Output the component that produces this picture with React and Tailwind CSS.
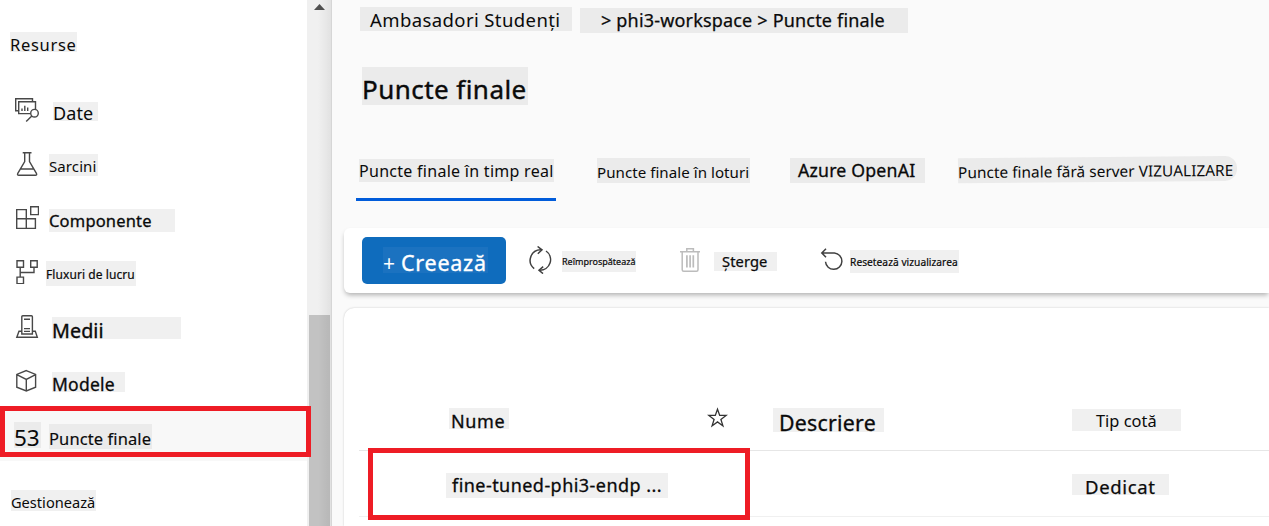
import React from "react";

function Tag({ box, text, children }) {
  return (
    <div className={`shrink-0 whitespace-pre ${box}`}>
      <span className={`block ${text}`}>{children}</span>
    </div>
  );
}

function Icon({ children, className = "ml-[15px] mt-[14px] h-6 w-6 text-[#484848]", viewBox = "0 0 24 24" }) {
  return (
    <svg className={`shrink-0 ${className}`} viewBox={viewBox} fill="none" stroke="currentColor" strokeWidth="1.4">
      {children}
    </svg>
  );
}

const NAV = [
  {
    label: "Date",
    box: "ml-[14px] mt-[18px] h-[19px] w-[45px] bg-[#f0f0f0]",
    text: "text-[18px] leading-[22px] tracking-[0.1px]",
    icon: (
      <>
        <path d="M3.5 12.8H.7V.8h16.8v3" />
        <path d="M15.2 15.6H3.7V3.8h16.8v7.4" />
        <path d="M7 10.6V13M9.8 7.8V13M12.7 9.4V13" />
        <circle cx="19.5" cy="15.2" r="3.8" />
        <path d="M16.8 17.9 11.2 23.5" />
      </>
    ),
  },
  {
    label: "Sarcini",
    box: "ml-[10px] mt-[16px] h-[22px] w-[49px] bg-[#f0f0f0]",
    text: "text-[15px] leading-[24px] tracking-[0.1px]",
    icon: (
      <>
        <path d="M7.7.8h8.8M9.7.8v8.7L2.8 21.3q-.9 2 1 2h16.6q1.9 0 1-2L14.5 9.5V.8M5.4 17h13.4" />
      </>
    ),
  },
  {
    label: "Componente",
    box: "ml-[10px] mt-[17px] h-[23px] w-[126px] bg-[#f0f0f0]",
    text: "text-[16.5px] leading-[23px] tracking-[0.18px] [-webkit-text-stroke:0.3px]",
    icon: (
      <>
        <path d="M1.7 3.6h9.6v18.8H1.7zM1.7 12.8h18.7v9.6H11.3M15.7.8h7.8v7.8h-7.8z" />
      </>
    ),
  },
  {
    label: "Fluxuri de lucru",
    box: "ml-[7px] mt-[15px] h-[25px] w-[90px] bg-[#f0f0f0]",
    text: "text-[12px] leading-[27px] tracking-[0.08px] [-webkit-text-stroke:0.2px]",
    icon: (
      <>
        <path d="M2 .7h6.5v6.5H2zM15.7.7h6.5v6.5h-6.5zM2 17.1h6.5v6.5H2zM5.2 7.2v9.9M5.2 12.5H19V7.2" />
      </>
    ),
  },
  {
    label: "Medii",
    box: "ml-[13px] mt-[17px] h-[22px] w-[129px] bg-[#f0f0f0]",
    text: "text-[19.7px] leading-[28px] tracking-[0.1px] [-webkit-text-stroke:0.35px]",
    icon: (
      <>
        <path d="M6.8 20V2.8q0-1 1-1h8.6q1 0 1 1V20zM6.8 17.3H4L1.8 23.3h20.5L20.3 17.3h-2.9M9 5.2h6M9 14.6h6M9 17.4h6" />
      </>
    ),
  },
  {
    label: "Modele",
    box: "ml-[13px] mt-[18px] h-[20px] w-[73px] bg-[#f0f0f0]",
    text: "text-[17.5px] leading-[24px] tracking-[0.25px] [-webkit-text-stroke:0.3px]",
    icon: (
      <>
        <path d="M11.3 2.6 20.6 6.4V19.2L11.3 23 1.8 19.2V6.4zM1.8 6.6l9.5 4.8 9.3-4.8M11.3 11.4V23" />
      </>
    ),
  },
];

function Sidebar() {
  return (
    <aside className="flex h-full w-[307px] shrink-0 flex-col bg-white">
      <div className="h-[84px] pl-[10px] pt-[32px]">
        <Tag box="h-[20px] w-[67px] bg-[#f0f0f0]" text="text-[16.5px] leading-[25px] tracking-[0.68px]">
          Resurse
        </Tag>
      </div>
      <nav className="flex h-[322px] shrink-0 flex-col">
        {NAV.map((n) => (
          <div key={n.label} className="flex h-[54px] shrink-0 items-start">
            <Icon>{n.icon}</Icon>
            <Tag box={n.box} text={n.text}>
              {n.label}
            </Tag>
          </div>
        ))}
      </nav>
      <div className="flex h-[55px] shrink-0 items-start bg-[#f8f8f8] pl-[14px]">
        <Tag box="mt-4 h-[26px] w-[27px] bg-[#ebebeb]" text="text-[22.5px] leading-[31px]">
          53
        </Tag>
        <Tag box="ml-2 mt-[18px] h-[25px] w-[103px] bg-[#ebebeb]" text="text-[16.5px] leading-[29px] tracking-[0.1px] [-webkit-text-stroke:0.15px]">
          Puncte finale
        </Tag>
      </div>
      <div className="pl-[11px] pt-[29px]">
        <Tag box="h-[21px] w-[85px] bg-[#f0f0f0]" text="text-[14.6px] leading-[24px]">
          Gestionează
        </Tag>
      </div>
    </aside>
  );
}

function Scrollbar() {
  return (
    <div className="relative flex h-full w-[25px] shrink-0 flex-col bg-[#f0f0f0]">
      <svg className="ml-[7px] mt-1 h-[6px] w-[11px] shrink-0" viewBox="0 0 11 6">
        <path d="M5.5 0 11 6H0z" fill="#505050" />
      </svg>
      <div className="ml-[2px] mt-[305px] w-[21px] grow bg-[#c2c2c2]" />
      <div className="absolute inset-y-0 right-0 w-[14px] border-r border-[#d6d6d6] bg-linear-to-r from-black/0 to-black/6" />
    </div>
  );
}

function Toolbar() {
  return (
    <div className="flex h-[65px] shrink-0 items-start rounded-l-md bg-white shadow-[0_3px_5px_-1px_rgba(0,0,0,0.3)]">
      <button className="ml-[18px] mt-[9px] flex h-[47px] w-[144px] shrink-0 items-start rounded-[5px] bg-[#0f6cbd] text-white">
        <span className="ml-[21px] mt-[10px] flex h-[26px] w-[105px] bg-[#1b72c0]">
          <span className="w-[18px] text-left text-[21px] leading-[33px]">+</span>
          <span className="text-[21.5px] leading-[32px] tracking-[0.75px] [-webkit-text-stroke:0.35px]">Creează</span>
        </span>
      </button>
      <Icon className="ml-[22px] mt-[18px] h-[28px] w-[24px] text-[#404040]" viewBox="0 0 24 28">
        <path d="M6.2 22.6A10.6 10.6 0 0 1 13 3.7M18 5a10.6 10.6 0 0 1-6.5 19.3" strokeWidth="1.5" />
        <path d="M9.6.5 14 3.8 9.8 7.8M15.2 20.6 11 24.3 15 27.6" strokeWidth="1.5" />
      </Icon>
      <Tag box="ml-[10px] mt-[23px] h-[21px] w-[74px] bg-[#f0f0f0]" text="text-[9px] leading-[21px] [-webkit-text-stroke:0.2px]">
        Reîmprospătează
      </Tag>
      <Icon className="ml-[44px] mt-[20px] h-[24px] w-[20px] text-[#bcbcbc]" viewBox="0 0 20 24">
        <path d="M0 3.7h20M6.8 3.7V.8h6.6v2.9M2.2 3.7v18q0 1.5 1.5 1.5h12.8q1.5 0 1.5-1.5v-18" strokeWidth="1.5" />
        <path d="M6.9 7.2v12.4M10.1 7.2v12.4M13.3 7.2v12.4" strokeWidth="1.7" />
      </Icon>
      <Tag box="ml-[14px] mt-[24px] h-[19px] w-[63px] bg-[#f0f0f0] pl-2" text="text-[14.7px] leading-[19px] tracking-[0.1px] [-webkit-text-stroke:0.25px]">
        Șterge
      </Tag>
      <Icon className="ml-[43px] mt-[20px] h-[24px] w-[24px] text-[#404040]">
        <path d="M2 5h12.4a8.2 8.2 0 1 1-8.9 8.8M6 .8 1.8 5 6 9.2" strokeWidth="1.5" />
      </Icon>
      <Tag box="ml-[6px] mt-[22px] h-[23px] w-[109px] bg-[#f0f0f0]" text="text-[10.2px] leading-[25px] tracking-[0.04px] [-webkit-text-stroke:0.2px]">
        Resetează vizualizarea
      </Tag>
    </div>
  );
}

function Table() {
  return (
    <div className="mt-[15px] flex grow flex-col rounded-tl-[10px] bg-white pl-[15px] shadow-[0_0_2px_rgba(0,0,0,0.22)]">
      <div className="flex h-[143px] shrink-0 items-start border-b border-[#e6e6e6]">
        <Tag box="ml-[90px] mt-[100px] h-[21px] w-[60px] bg-[#f0f0f0] pl-[2px]" text="text-[18px] leading-[26px] tracking-[0.65px] [-webkit-text-stroke:0.3px]">
          Nume
        </Tag>
        <Icon className="ml-[198px] mt-[99px] h-[21px] w-[21px] text-[#333]" viewBox="0 0 21 21">
          <path d="M10.5 2.2 12.7 8.4h6.4l-5.2 4 2 6.5-5.4-4-5.4 4 2-6.5-5.2-4h6.4z" strokeWidth="1.3" />
        </Icon>
        <Tag box="ml-[45px] mt-[100px] h-[24px] w-[111px] bg-[#f0f0f0] pl-[6px]" text="text-[21.3px] leading-[30px] tracking-[0.25px] [-webkit-text-stroke:0.3px]">
          Descriere
        </Tag>
        <Tag box="ml-[188px] mt-[101px] h-[22px] w-[109px] bg-[#f0f0f0] pl-[24px]" text="text-[16.4px] leading-[24px]">
          Tip cotă
        </Tag>
      </div>
      <div className="flex h-[66px] shrink-0 items-start border-b border-[#f0f0f0]">
        <Tag box="ml-[87px] mt-[22px] h-[25px] w-[222px] bg-[#f0f0f0] pl-[6px]" text="text-[18px] leading-[25px] tracking-[0.45px] [-webkit-text-stroke:0.3px]">
          fine-tuned-phi3-endp ...
        </Tag>
        <Tag box="ml-[404px] mt-[23px] h-[21px] w-[97px] bg-[#f0f0f0] pl-[13px]" text="text-[18.5px] leading-[25px] tracking-[0.65px] [-webkit-text-stroke:0.25px]">
          Dedicat
        </Tag>
      </div>
    </div>
  );
}

function Main() {
  return (
    <main className="flex h-full min-w-0 grow flex-col overflow-hidden bg-[#fafafa] pl-3">
      <div className="flex h-[67px] shrink-0 items-start pl-4 pt-[7px]">
        <Tag box="h-[24px] w-[212px] bg-[#ebebeb] pl-[10px]" text="text-[18.5px] leading-[26px] tracking-[0.4px]">
          Ambasadori Studenți
        </Tag>
        <Tag box="ml-2 mt-px h-[25px] w-[328px] bg-[#ebebeb] pl-[21px]" text="text-[18px] leading-[25px] tracking-[0.18px] [-webkit-text-stroke:0.25px]">
          {"> phi3-workspace > Puncte finale"}
        </Tag>
      </div>
      <div className="h-[87px] shrink-0 pl-[18px]">
        <Tag box="h-[38px] w-[166px] bg-[#ebebeb]" text="text-[26px] leading-[45px] tracking-[0.45px] [-webkit-text-stroke:0.4px]">
          Puncte finale
        </Tag>
      </div>
      <div className="flex h-[74px] shrink-0 items-start pl-3">
        <div className="h-[47px] w-[200px] shrink-0 border-b-3 border-[#015cda] pl-[3px] pt-[5px]">
          <Tag box="h-[23px] w-[195px] bg-[#ebebeb]" text="text-[16px] leading-[24px] tracking-[0.28px]">
            Puncte finale în timp real
          </Tag>
        </div>
        <Tag box="ml-[41px] mt-[4px] h-[25px] w-[153px] bg-[#ebebeb]" text="text-[15.1px] leading-[29px] tracking-[0.04px]">
          Puncte finale în loturi
        </Tag>
        <Tag box="ml-[40px] mt-[4px] h-[25px] w-[135px] bg-[#ebebeb] pl-[8px]" text="text-[17.7px] leading-[25px] tracking-[0.2px] [-webkit-text-stroke:0.3px]">
          Azure OpenAI
        </Tag>
        <Tag box="ml-[33px] mt-[3px] h-[25px] w-[279px] origin-center -rotate-[0.5deg] rounded-r-xl bg-[#ebebeb]" text="text-[15.4px] leading-[29px] tracking-[0.03px]">
          Puncte finale fără server VIZUALIZARE
        </Tag>
      </div>
      <Toolbar />
      <Table />
    </main>
  );
}

export default function App() {
  return (
    <div className="relative flex h-[526px] w-[1269px] overflow-hidden bg-white font-['Noto_Sans',sans-serif] text-[#0a0a0a]">
      <Sidebar />
      <Scrollbar />
      <Main />
      <div className="pointer-events-none absolute left-0 top-[406px] h-[51px] w-[311px] border-5 border-[#ee1c25]" />
      <div className="pointer-events-none absolute left-[368px] top-[448px] h-[72px] w-[382px] border-5 border-[#ee1c25]" />
    </div>
  );
}
